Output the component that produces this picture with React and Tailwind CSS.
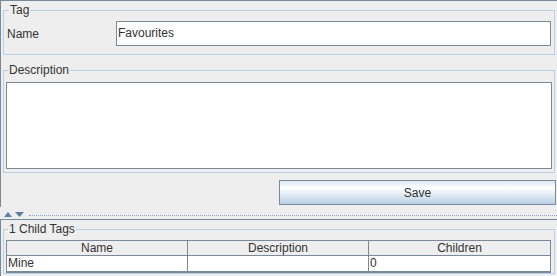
import React from 'react';

const font = { fontFamily: '"Liberation Sans", Arial, sans-serif' };

function Group({ title, className = '', children }) {
  return (
    <fieldset className={`w-[552px] border border-[#b8cfe5] ${className}`}>
      <legend className="ml-[2px] px-[1px] h-[14px] leading-[14px] text-[12px] text-[#333333]">
        {title}
      </legend>
      {children}
    </fieldset>
  );
}

function Divider() {
  return (
    <div className="h-[12px] flex items-center gap-[3px] pl-[4px]">
      <svg width="8" height="5" viewBox="0 0 8 5" className="mt-[2px]">
        <polygon points="0,5 8,5 4,0" fill="#5b7fa8" />
      </svg>
      <svg width="9" height="5" viewBox="0 0 9 5" className="mt-[2px]">
        <polygon points="0,0 9,0 4.5,5" fill="#5b7fa8" />
      </svg>
      <div className="flex-1 h-[1px] mt-[4px] ml-[2px] border-t border-dotted border-[#8fa5bf]" />
    </div>
  );
}

export default function App() {
  const cols = ['Name', 'Description', 'Children'];

  return (
    <div className="w-[557px] h-[276px] overflow-hidden bg-[#eeeeee] text-[12px] text-[#333333]" style={font}>
      {/* Tag editor */}
      <div className="h-[207px] border-t border-l border-[#7a8a99] pl-[2px] pt-[2px]">
        <Group title="Tag" className="px-[3px] pb-[8px]">
          <div className="flex items-center mt-[4px]">
            <div className="w-[109px]">Name</div>
            <div className="flex-1 h-[25px] border border-[#7a8a99] bg-white pl-[1px] leading-[23px]">
              Favourites
            </div>
          </div>
        </Group>

        <Group title="Description" className="mt-[8px] px-[2px] pb-[3px]">
          <div className="mt-[5px] h-[87px] border border-[#7a8a99] bg-white" />
        </Group>

        <div className="flex justify-end mt-[7px] pr-[1px]">
          <button className="w-[277px] h-[25px] border border-[#7a8a99] bg-[linear-gradient(to_bottom,#dde8f3_0%,#ffffff_30%,#b8cfe5_100%)] text-[12px] text-[#333333]">
            Save
          </button>
        </div>
      </div>

      <Divider />

      {/* Child tags */}
      <div className="h-[57px] border-t border-l border-[#7a8a99] pl-[2px] pt-[2px]">
        <Group title="1 Child Tags" className="px-[2px]">
          <div className="mt-[4px] w-[545px] border border-[#7a8a99]">
            <div className="flex h-[15px] border-b border-[#7a8a99]">
              {cols.map((c, i) => (
                <div
                  key={c}
                  className={`w-[181px] text-center leading-[14px] ${i < 2 ? 'border-r border-[#7a8a99]' : ''}`}
                >
                  {c}
                </div>
              ))}
            </div>
            <div className="flex h-[16px] bg-white border-b border-[#7a8a99]">
              <div className="w-[181px] pl-[1px] leading-[15px] border-r border-[#7a8a99]">Mine</div>
              <div className="w-[181px] border-r border-[#7a8a99]" />
              <div className="w-[181px] pl-[1px] leading-[15px]">0</div>
            </div>
          </div>
        </Group>
      </div>
    </div>
  );
}
